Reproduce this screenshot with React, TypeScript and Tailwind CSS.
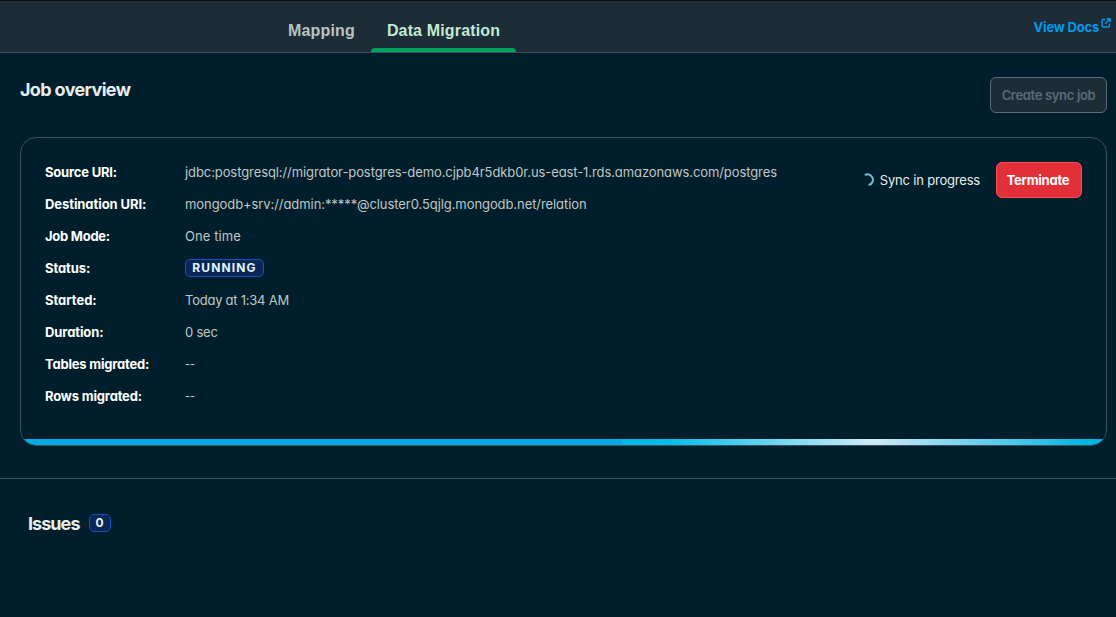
import type { ReactNode } from "react";

function Row({ label, labelClass, children }: { label: string; labelClass: string; children: ReactNode }) {
  return (
    <div className="flex h-8 items-center text-[13px] whitespace-nowrap">
      <dt className={`w-[140px] shrink-0 font-bold text-white ${labelClass}`}>{label}</dt>
      <dd className="text-[#c1c7c6]">{children}</dd>
    </div>
  );
}

function Badge({ className, children }: { className: string; children: ReactNode }) {
  return (
    <span
      className={`flex h-[18px] items-center justify-center rounded-[5px] border border-[#1254b7] bg-[#0c2657] text-[12px] leading-4 font-bold text-[#e1f7ff] ${className}`}
    >
      {children}
    </span>
  );
}

export default function App() {
  return (
    <div className="h-[617px] w-[1116px] overflow-hidden bg-[#001e2b] font-['Inter','Liberation_Sans',sans-serif] [font-feature-settings:'cv11']">
      <header className="flex h-[53px] justify-between border-t border-b border-t-[#0b0f12] border-b-[#3d4f58] bg-[#1c2d38]">
        <nav className="flex pl-[272px] font-['Liberation_Sans',sans-serif] text-[16px] font-bold">
          <a className="flex w-[99px] items-center justify-center pt-[8px] tracking-[0.15px] text-[#b8c4c2]">Mapping</a>
          <a className="flex w-[145px] flex-col items-center tracking-[0.15px] text-[#c0ead0]">
            <span className="mt-[18px] h-[29px] leading-6">Data Migration</span>
            <span className="h-1 w-full rounded-t-[4px] bg-[#00a35c]" />
          </a>
        </nav>
        <a className="flex pt-[16px] pr-[5px] text-[13px] leading-5 font-bold text-[#0498ec]">
          <span className="tracking-[-0.2px]">View Docs</span>
          <svg className="mt-px ml-[2px] size-[10px]" viewBox="0 0 10 10" fill="none" stroke="currentColor" strokeWidth="1.4">
            <path d="M4.2 1.5H2.2Q1 1.5 1 2.7V7.8Q1 9 2.2 9H7.2Q8.4 9 8.4 7.8V5.8M5.8.8H9.2V4.2M9 1L4.2 5.8" />
          </svg>
        </a>
      </header>

      <section className="flex h-[84px] justify-between pr-[9px] pl-5">
        <h2 className="mt-[25px] text-[18px] leading-6 font-bold tracking-[-0.65px] text-[#e8edeb]">Job overview</h2>
        <button className="mt-6 h-9 w-[117px] rounded-[6px] border border-[#5c6c75] bg-[#1c2d38] pt-[2px] text-[13px] font-semibold tracking-[-0.33px] whitespace-nowrap text-[#5c6c75]">
          Create sync job
        </button>
      </section>

      <section className="mr-[9px] ml-5 flex h-[309px] flex-col justify-between overflow-hidden rounded-[16px] border border-[#3d4f58]">
        <div className="flex justify-between pt-[19px] pr-6 pl-6">
          <dl>
            <Row label="Source URI:" labelClass="tracking-[-0.2px]">
              <span className="tracking-[-0.09px]">
                jdbc:postgresql://migrator-postgres-demo.cjpb4r5dkb0r.us-east-1.rds.amazonaws.com/postgres
              </span>
            </Row>
            <Row label="Destination URI:" labelClass="tracking-[-0.07px]">
              <span className="tracking-[-0.075px]">mongodb+srv://admin:*****@cluster0.5qjlg.mongodb.net/relation</span>
            </Row>
            <Row label="Job Mode:" labelClass="tracking-[-0.25px]">
              <span className="tracking-[0.1px]">One time</span>
            </Row>
            <Row label="Status:" labelClass="tracking-[-0.1px]">
              <Badge className="mb-[2px] w-[79px] tracking-[1.15px]">RUNNING</Badge>
            </Row>
            <Row label="Started:" labelClass="tracking-[-0.02px]">
              <span className="tracking-[-0.24px]">Today at 1:34 AM</span>
            </Row>
            <Row label="Duration:" labelClass="tracking-[-0.1px]">
              <span className="tracking-[-0.2px]">0 sec</span>
            </Row>
            <Row label="Tables migrated:" labelClass="tracking-[-0.2px]">
              <span className="inline-block origin-left scale-x-[0.84]">--</span>
            </Row>
            <Row label="Rows migrated:" labelClass="tracking-[-0.17px]">
              <span className="inline-block origin-left scale-x-[0.84]">--</span>
            </Row>
          </dl>
          <div className="mt-[5px] flex h-9 items-center text-[13px] whitespace-nowrap">
            <svg className="mr-[5px] h-[14px] w-[11px]" viewBox="0 0 11 14" fill="none">
              <path d="M1.6 1.7A5 5 0 0 1 5.4 11.8" stroke="#78bdd6" strokeWidth="2" strokeLinecap="round" />
            </svg>
            <span className="mr-4 pt-[2px] tracking-[-0.19px] text-[#e8edeb]">Sync in progress</span>
            <button className="h-9 w-[86px] rounded-[6px] border border-[#f8505a] bg-[#e32f38] pt-[2px] pr-[2px] font-bold tracking-[-0.25px] text-white">
              Terminate
            </button>
          </div>
        </div>
        <div className="h-[6px] shrink-0 bg-[linear-gradient(90deg,#00ace3_0,#00ace3_601px,#00b9e8_601px,#00bfea_647px,#c9e9f5_844px,#c9e9f5_858px,#00b6e4_1067px)]" />
      </section>

      <section className="mt-8 flex items-start border-t border-[#3d4f58] pt-[33px] pl-7">
        <h2 className="text-[18px] leading-6 font-bold tracking-[-0.95px] text-[#e8edeb]">Issues</h2>
        <Badge className="mt-[2px] ml-[9px] w-[22px]">0</Badge>
      </section>
    </div>
  );
}
